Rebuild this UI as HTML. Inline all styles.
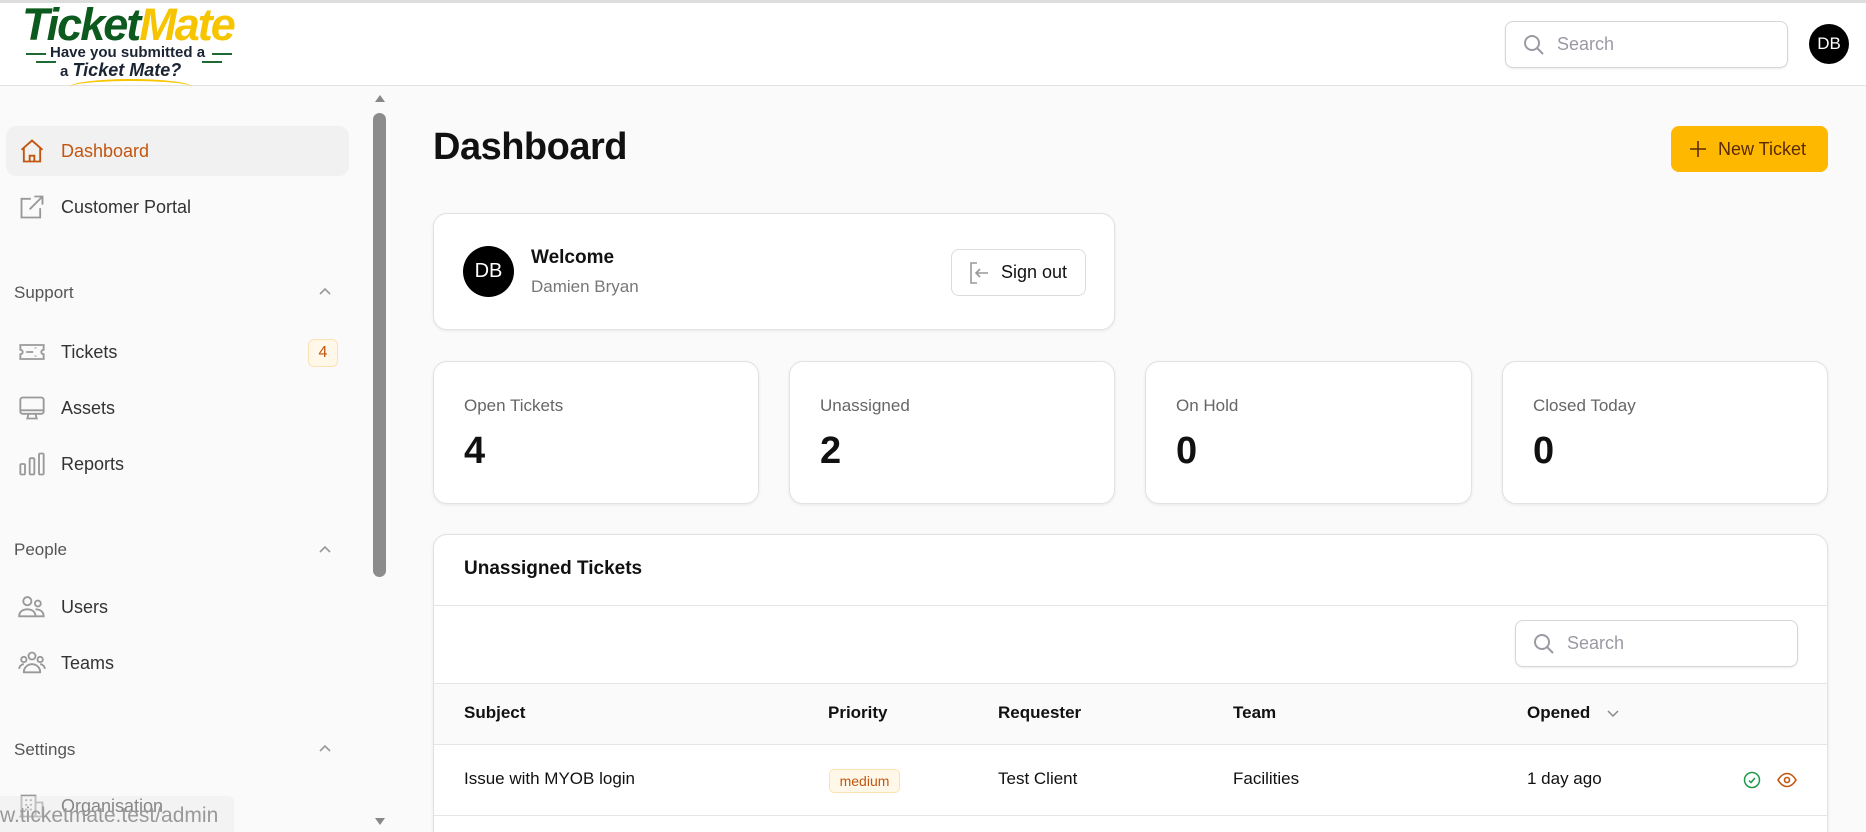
<!DOCTYPE html>
<html style="width:1866px;height:832px;overflow:hidden"><head><meta charset="utf-8"><style>
*{box-sizing:border-box;margin:0;padding:0}
body{width:1866px;height:832px;overflow:hidden;background:#fafafa;font-family:"Liberation Sans",sans-serif;color:#111;position:relative}
.abs{position:absolute}
.hdr{left:0;top:0;width:1866px;height:86px;background:#fff;border-top:3px solid #ddd;border-bottom:1px solid #e3e3e3}
.card{position:absolute;background:#fff;border:1px solid #e2e2e2;border-radius:14px;box-shadow:0 1px 3px rgba(0,0,0,.08)}
.nav{position:absolute;left:6px;width:343px;height:50px;display:flex;align-items:center;font-size:18px;color:#333;border-radius:10px}
.nav svg{position:absolute;left:12px}
.nav span{position:absolute;left:55px}
.sec{position:absolute;left:14px;font-size:17px;color:#555}
.chev{position:absolute;left:318px}
.lbl{position:absolute;left:30px;top:34px;font-size:17px;color:#666}
.num{position:absolute;left:30px;top:68px;font-size:38px;font-weight:bold;color:#111}
.th{position:absolute;top:703px;font-size:17px;font-weight:bold}
.td{position:absolute;top:769px;font-size:17px}
</style></head><body>
<div class="abs hdr"></div>
<!-- logo -->
<div class="abs" style="left:22px;top:2px;font-size:45px;font-weight:bold;font-style:italic;letter-spacing:-2px;line-height:46px"><span style="color:#0c5a1e">Ticket</span><span style="color:#f7c400">Mate</span></div>
<div class="abs" style="left:26px;top:53px;width:20px;height:2px;background:#1d6b32"></div>
<div class="abs" style="left:212px;top:53px;width:20px;height:2px;background:#1d6b32"></div>
<div class="abs" style="left:50px;top:44px;font-size:15px;font-weight:bold;color:#1b2433">Have you submitted a</div>
<div class="abs" style="left:36px;top:61px;width:20px;height:2px;background:#1d6b32"></div>
<div class="abs" style="left:202px;top:61px;width:20px;height:2px;background:#1d6b32"></div>
<div class="abs" style="left:60px;top:60px;font-size:18px;font-weight:bold;color:#1b2433"><span style="font-size:15px">a </span><i>Ticket Mate?</i></div>
<div class="abs" style="left:70px;top:79px;width:122px;height:8px;border-top:2px solid #f7c400;border-radius:50%/100% 100% 0 0"></div>
<!-- header search -->
<div class="abs" style="left:1505px;top:21px;width:283px;height:47px;border:1px solid #d6d6d6;border-radius:8px;background:#fff;box-shadow:0 1px 2px rgba(0,0,0,.08)"></div>
<svg class="abs" style="left:1523px;top:34px" width="22" height="22" viewBox="0 0 22 22" fill="none" stroke="#9a9aa4" stroke-width="2"><circle cx="9" cy="9" r="7"/><path d="M14 14l6 6"/></svg>
<div class="abs" style="left:1557px;top:34px;font-size:18px;color:#9a9aa4">Search</div>
<div class="abs" style="left:1809px;top:24px;width:40px;height:40px;border-radius:50%;background:#000;color:#fff;font-size:17px;text-align:center;line-height:40px">DB</div>
<!-- sidebar -->
<div class="abs" style="left:373px;top:113px;width:13px;height:464px;background:#8c8c8c;border-radius:7px"></div>
<div class="abs" style="left:375px;top:95px;width:0;height:0;border-left:5px solid transparent;border-right:5px solid transparent;border-bottom:7px solid #888"></div>
<div class="abs" style="left:375px;top:818px;width:0;height:0;border-left:5px solid transparent;border-right:5px solid transparent;border-top:7px solid #888"></div>
<div class="nav" style="top:126px;background:#f1f1f1;color:#c2560f"><svg width="28" height="28" viewBox="0 0 24 24" fill="none" stroke="#c2560f" stroke-width="1.6"><path d="M3 11L12 3l9 8M5 9.5V21h14V9.5M10 21v-5h4v5"/></svg><span>Dashboard</span></div>
<div class="nav" style="top:182px"><svg width="28" height="28" viewBox="0 0 24 24" fill="none" stroke="#999" stroke-width="1.6"><path d="M11 5H3v16h16v-8M14 3h7v7M21 3L10 14"/></svg><span>Customer Portal</span></div>
<div class="sec" style="top:283px">Support</div>
<svg class="chev" style="top:286px" width="14" height="10" viewBox="0 0 14 10" fill="none" stroke="#999" stroke-width="1.6"><path d="M2 8l5-5 5 5"/></svg>
<div class="nav" style="top:327px"><svg width="28" height="28" viewBox="0 0 24 24" fill="none" stroke="#999" stroke-width="1.6"><path d="M2 6h20v4a2 2 0 000 4v4H2v-4a2 2 0 000-4z M7 12h6M15 8v1M15 12v0M15 15v1"/></svg><span>Tickets</span></div>
<div class="abs" style="left:308px;top:339px;width:30px;height:28px;border:1px solid #fbe2b5;background:#fff8e8;border-radius:6px;color:#c2560f;font-size:16px;text-align:center;line-height:26px">4</div>
<div class="nav" style="top:383px"><svg width="28" height="28" viewBox="0 0 24 24" fill="none" stroke="#999" stroke-width="1.6"><rect x="2" y="3" width="20" height="14" rx="2"/><path d="M2 14h20M9 17l-1 4h8l-1-4"/></svg><span>Assets</span></div>
<div class="nav" style="top:439px"><svg width="28" height="28" viewBox="0 0 24 24" fill="none" stroke="#999" stroke-width="1.6"><rect x="2" y="12" width="4" height="9" rx="1"/><rect x="10" y="7" width="4" height="14" rx="1"/><rect x="18" y="3" width="4" height="18" rx="1"/></svg><span>Reports</span></div>
<div class="sec" style="top:540px">People</div>
<svg class="chev" style="top:544px" width="14" height="10" viewBox="0 0 14 10" fill="none" stroke="#999" stroke-width="1.6"><path d="M2 8l5-5 5 5"/></svg>
<div class="nav" style="top:582px"><svg width="28" height="28" viewBox="0 0 24 24" fill="none" stroke="#999" stroke-width="1.6"><circle cx="8" cy="7" r="3.5"/><circle cx="17" cy="9" r="2.5"/><path d="M1 20c0-4 3-6 7-6s7 2 7 6z M15 14c4 0 7 2 7 6h-7"/></svg><span>Users</span></div>
<div class="nav" style="top:638px"><svg width="28" height="28" viewBox="0 0 24 24" fill="none" stroke="#999" stroke-width="1.6"><circle cx="12" cy="6" r="3"/><circle cx="5" cy="9" r="2.3"/><circle cx="19" cy="9" r="2.3"/><path d="M5 20c0-4 3-7 7-7s7 3 7 7z M1 17c0-2 2-4 4-4M23 17c0-2-2-4-4-4"/></svg><span>Teams</span></div>
<div class="sec" style="top:740px">Settings</div>
<svg class="chev" style="top:743px" width="14" height="10" viewBox="0 0 14 10" fill="none" stroke="#999" stroke-width="1.6"><path d="M2 8l5-5 5 5"/></svg>
<div class="nav" style="top:781px"><svg width="28" height="28" viewBox="0 0 24 24" fill="none" stroke="#999" stroke-width="1.6"><path d="M3 21V3h12v18M15 9h6v12M1 21h22M6 7h2M10 7h2M6 11h2M10 11h2M6 15h2M10 15h2"/></svg><span>Organisation</span></div>
<div class="abs" style="left:0;top:796px;width:234px;height:36px;background:rgba(235,235,235,.45);border-top-right-radius:6px;font-size:21px;color:#999;line-height:40px">w.ticketmate.test/admin</div>
<!-- main -->
<div class="abs" style="left:433px;top:126px;font-size:38px;font-weight:bold;letter-spacing:-0.5px">Dashboard</div>
<div class="abs" style="left:1671px;top:126px;width:157px;height:46px;background:#ffb800;border-radius:8px;color:#5a2a00;font-size:18px;line-height:46px;padding-left:47px">New Ticket</div>
<svg class="abs" style="left:1688px;top:139px" width="20" height="20" viewBox="0 0 20 20" stroke="#5a2a00" stroke-width="1.6"><path d="M10 2v16M2 10h16"/></svg>
<div class="card" style="left:433px;top:213px;width:682px;height:117px"></div>
<div class="abs" style="left:463px;top:246px;width:51px;height:51px;border-radius:50%;background:#000;color:#fff;font-size:20px;text-align:center;line-height:51px">DB</div>
<div class="abs" style="left:531px;top:247px;font-size:19px;font-weight:bold">Welcome</div>
<div class="abs" style="left:531px;top:277px;font-size:17px;color:#777">Damien Bryan</div>
<div class="abs" style="left:951px;top:249px;width:135px;height:47px;border:1px solid #dcdcdc;border-radius:8px;background:#fff;font-size:18px;line-height:45px;padding-left:49px">Sign out</div>
<svg class="abs" style="left:968px;top:261px" width="22" height="24" viewBox="0 0 22 24" fill="none" stroke="#999" stroke-width="1.6"><path d="M9 2H3v20h6M8 12h12M12 8l-4 4 4 4"/></svg>
<div class="card" style="left:433px;top:361px;width:326px;height:143px"><div class="lbl">Open Tickets</div><div class="num">4</div></div>
<div class="card" style="left:789px;top:361px;width:326px;height:143px"><div class="lbl">Unassigned</div><div class="num">2</div></div>
<div class="card" style="left:1145px;top:361px;width:327px;height:143px"><div class="lbl">On Hold</div><div class="num">0</div></div>
<div class="card" style="left:1502px;top:361px;width:326px;height:143px"><div class="lbl">Closed Today</div><div class="num">0</div></div>
<div class="card" style="left:433px;top:534px;width:1395px;height:320px;overflow:hidden">
 <div class="abs" style="left:30px;top:23px;font-size:19px;font-weight:bold">Unassigned Tickets</div>
 <div class="abs" style="left:0;top:70px;width:100%;height:1px;background:#e5e5e5"></div>
 <div class="abs" style="left:0;top:148px;width:100%;height:62px;background:#fafafa;border-top:1px solid #e5e5e5;border-bottom:1px solid #e5e5e5"></div>
 <div class="abs" style="left:0;top:280px;width:100%;height:1px;background:#e5e5e5"></div>
</div>
<div class="abs" style="left:1515px;top:620px;width:283px;height:47px;border:1px solid #d6d6d6;border-radius:8px;background:#fff;box-shadow:0 1px 2px rgba(0,0,0,.08)"></div>
<svg class="abs" style="left:1533px;top:633px" width="22" height="22" viewBox="0 0 22 22" fill="none" stroke="#9a9aa4" stroke-width="2"><circle cx="9" cy="9" r="7"/><path d="M14 14l6 6"/></svg>
<div class="abs" style="left:1567px;top:633px;font-size:18px;color:#9a9aa4">Search</div>
<div class="th" style="left:464px">Subject</div>
<div class="th" style="left:828px">Priority</div>
<div class="th" style="left:998px">Requester</div>
<div class="th" style="left:1233px">Team</div>
<div class="th" style="left:1527px">Opened</div>
<svg class="abs" style="left:1606px;top:708px" width="14" height="10" viewBox="0 0 14 10" fill="none" stroke="#888" stroke-width="1.5"><path d="M2 3l5 5 5-5"/></svg>
<div class="td" style="left:464px">Issue with MYOB login</div>
<div class="abs" style="left:829px;top:769px;width:71px;height:24px;background:#fff8e8;border:1px solid #fbe2b5;border-radius:5px;color:#c2560f;font-size:14px;text-align:center;line-height:22px">medium</div>
<div class="td" style="left:998px">Test Client</div>
<div class="td" style="left:1233px">Facilities</div>
<div class="td" style="left:1527px">1 day ago</div>
<svg class="abs" style="left:1743px;top:771px" width="18" height="18" viewBox="0 0 18 18" fill="none" stroke="#1f9a4a" stroke-width="1.5"><circle cx="9" cy="9" r="7.5"/><path d="M6 9.5l2 2 4-4.5"/></svg>
<svg class="abs" style="left:1777px;top:772px" width="20" height="16" viewBox="0 0 20 16" fill="none" stroke="#c2560f" stroke-width="1.6"><path d="M1 8c3-5 6-6.5 9-6.5s6 1.5 9 6.5c-3 5-6 6.5-9 6.5S4 13 1 8z"/><circle cx="10" cy="8" r="2.5"/></svg>
</body></html>
